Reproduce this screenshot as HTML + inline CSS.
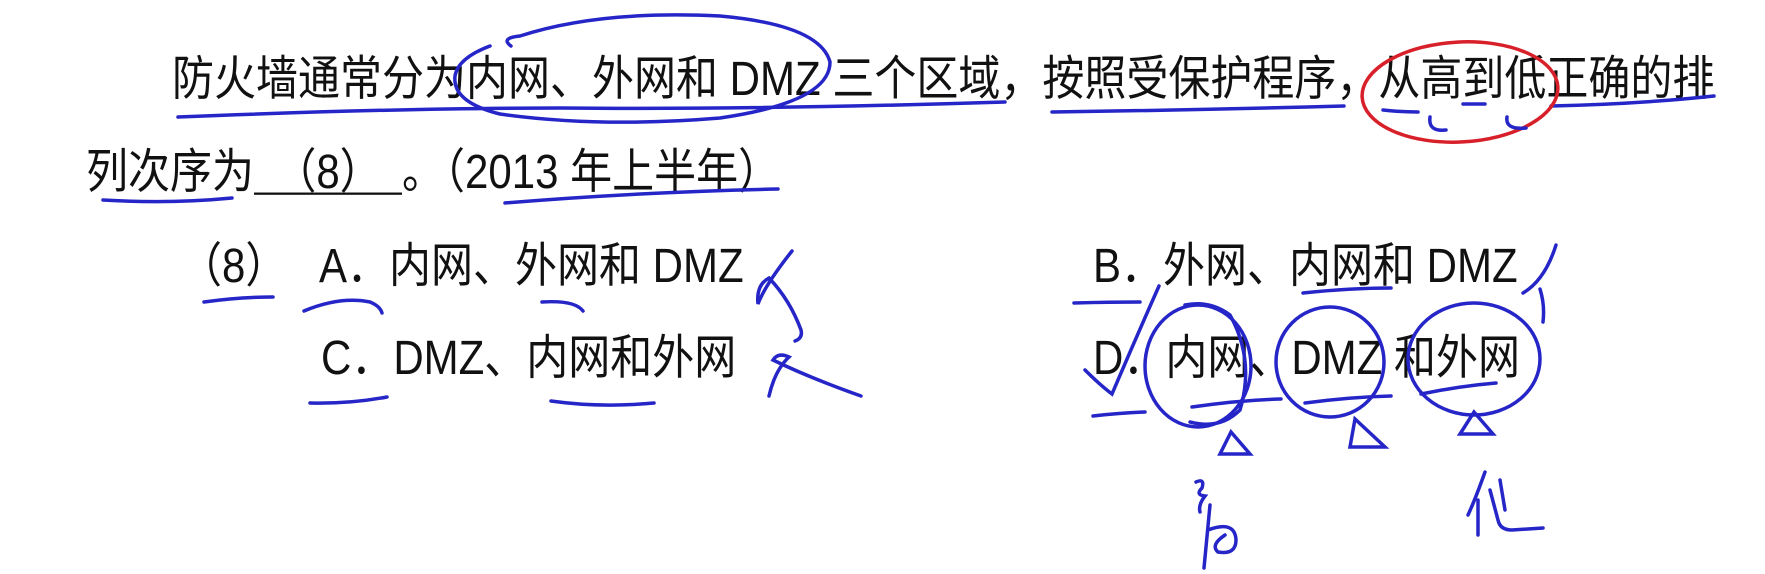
<!DOCTYPE html>
<html><head><meta charset="utf-8"><style>
html,body{margin:0;padding:0;background:#fff;}
body{width:1765px;height:574px;position:relative;overflow:hidden;font-family:"Liberation Sans","Noto Sans CJK SC",sans-serif;color:#111;}
.t{position:absolute;font-size:42px;line-height:44px;white-space:nowrap;transform:scaleY(1.14);transform-origin:0 50%;}
svg{position:absolute;left:0;top:0;}
</style></head><body>
<div class="t" style="left:172px;top:57px;">防火墙通常分为内网、外网和 <span>DMZ</span> 三个区域，按照受保护程序，从高到低正确的排</div>
<div class="t" style="left:86px;top:150px;">列次序为<span style="display:inline-block;width:148px;border-bottom:2px solid #111;text-align:center;height:40px;vertical-align:top;">（8）</span>。（2013 年上半年）</div>
<div class="t" style="left:180px;top:244px;">（8）</div>
<div class="t" style="left:319px;top:244px;">A．内网、外网和 DMZ</div>
<div class="t" style="left:321px;top:336px;">C．DMZ、内网和外网</div>
<div class="t" style="left:1093px;top:244px;">B．外网、内网和 DMZ</div>
<div class="t" style="left:1093px;top:336px;">D．内网、DMZ 和外网</div>
<svg width="1765" height="574" viewBox="0 0 1765 574" fill="none" stroke="#2626c8" stroke-width="3.5" stroke-linecap="round">
<path d="M178 117 Q400 108 560 108 Q750 110 1005 102"/>
<path d="M1052 112 Q1200 110 1344 106"/>
<path d="M1551 106 Q1640 104 1714 96"/>
<path d="M511 46 Q500 38 520 36 Q600 10 720 16 Q820 25 830 62 Q830 102 720 118 Q600 128 500 114 Q452 102 455 76 Q458 58 490 46"/>
<path d="M103 200 Q170 204 232 198"/>
<path d="M505 203 Q640 192 778 189"/>
<path d="M204 302 Q240 297 273 297"/>
<path d="M304 311 Q340 296 370 302 Q380 306 382 313"/>
<path d="M542 302 Q575 300 583 311"/>
<path d="M792 251 Q765 285 758 304 Q756 285 769 278 Q790 300 801 330 Q803 338 795 341"/>
<path d="M769 396 Q775 370 789 357 Q778 352 773 360 Q810 378 861 396"/>
<path d="M310 403 Q350 404 387 397"/>
<path d="M551 401 Q600 408 654 403"/>
<path d="M1074 303 Q1110 302 1140 302"/>
<path d="M1303 293 Q1350 288 1391 288"/>
<path d="M1085 370 Q1100 385 1112 394 Q1135 340 1159 286"/>
<path d="M1093 416 Q1120 413 1145 412"/>
<ellipse cx="1198" cy="366" rx="53" ry="61"/>
<path d="M1185 305 Q1210 300 1230 315 Q1255 360 1240 410 Q1220 430 1190 422"/>
<ellipse cx="1330" cy="362" rx="54" ry="55"/>
<ellipse cx="1474" cy="359" rx="66" ry="56"/>
<path d="M1192 407 Q1240 400 1281 399"/>
<path d="M1305 403 Q1350 397 1391 396"/>
<path d="M1421 394 Q1460 386 1496 383"/>
<path d="M1220 454 L1231 432 L1250 454 Z"/>
<path d="M1350 447 L1355 419 L1385 447 Z"/>
<path d="M1460 434 L1474 412 L1493 434 Z"/>
<path d="M1556 245 Q1545 280 1523 293 M1540 289 Q1545 305 1543 322"/>
<path d="M1196 482 Q1205 478 1202 488 Q1195 495 1205 496 Q1198 505 1200 512 M1210 505 L1204 568 M1208 530 Q1235 520 1236 540 Q1236 555 1218 552 Q1210 545 1225 535"/>
<path d="M1485 472 Q1475 500 1468 515 M1478 500 L1478 535 M1490 490 L1498 520 Q1500 530 1512 530 L1543 528 M1500 480 L1505 510"/>
<ellipse cx="1460" cy="92" rx="98" ry="50" stroke="#d8202a" transform="rotate(-3 1460 92)"/>
<path d="M1383 110 Q1400 112 1418 112"/>
<path d="M1430 117 Q1428 132 1446 130"/>
<path d="M1463 104 L1485 104"/>
<path d="M1507 117 Q1505 130 1526 128"/>
</svg>
</body></html>
